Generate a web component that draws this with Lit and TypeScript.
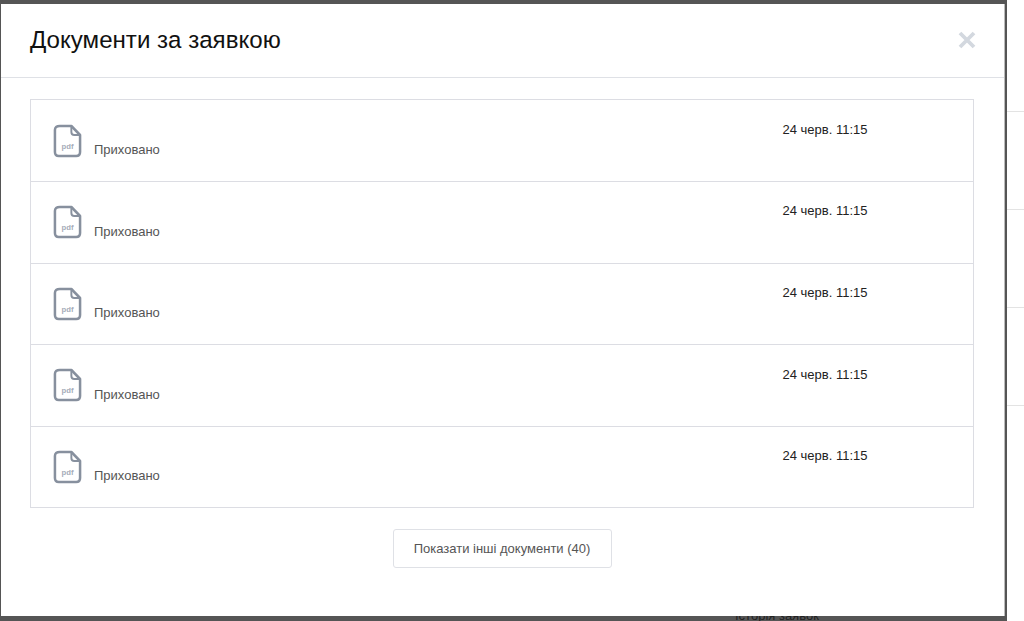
import { html, LitElement, css } from 'lit';
import { customElement } from 'lit/decorators.js';

const pdfIcon = html`<svg class="file-icon" width="29" height="34" viewBox="0 0 30 34" preserveAspectRatio="none" fill="none">
  <path d="M7 2 H19 L28 11 V28 Q28 32 24 32 H6 Q2 32 2 28 V6 Q2 2 7 2 Z" stroke="#87909e" stroke-width="2.6" stroke-linejoin="round"/>
  <path d="M19 2 V8 Q19 11 22 11 H28" stroke="#87909e" stroke-width="2" stroke-linejoin="round"/>
  <text x="15" y="25" text-anchor="middle" class="pdf-label">pdf</text>
</svg>`;

@customElement('app-root')
export class AppRoot extends LitElement {
  static styles = css`
    :host {
      display: flex;
      width: 1024px;
      height: 621px;
      overflow: hidden;
      background: #fff;
      font-family: 'Liberation Sans', Arial, sans-serif;
    }
    .backdrop {
      position: relative;
      box-sizing: border-box;
      width: 1007px;
      height: 621px;
      padding: 4px 2px 5px 1px;
      background: #555;
    }
    .peek {
      position: absolute;
      left: 735px;
      top: 608px;
      font-size: 13px;
      line-height: 16px;
      color: #222;
    }
    .modal {
      position: relative;
      z-index: 1;
      box-sizing: border-box;
      height: 612px;
      background: #fff;
      border-right: 1px solid #bbb;
    }
    .modal-head {
      display: flex;
      align-items: center;
      justify-content: space-between;
      box-sizing: border-box;
      height: 74px;
      padding: 0 29px 2px;
      border-bottom: 1px solid #dfe1e6;
    }
    h2 {
      margin: 0;
      font-size: 24.1px;
      font-weight: 400;
      color: #111;
    }
    .close {
      display: block;
      margin-right: -1px;
    }
    .modal-body {
      padding: 21px 30px 0 29px;
    }
    .list {
      border: 1px solid #dcdde3;
      border-bottom: 0;
      padding-top: 0.5px;
    }
    .row {
      display: flex;
      box-sizing: border-box;
      height: 81.6px;
      border-bottom: 1px solid #dcdde3;
    }
    .file {
      display: flex;
      flex: 1;
      padding: 23px 0 0 22px;
    }
    .file-icon {
      flex: none;
    }
    .pdf-label {
      font-family: 'Liberation Sans', Arial, sans-serif;
      font-size: 8px;
      font-weight: 700;
      fill: #a5acb9;
    }
    .name {
      margin: 18.5px 0 0 12px;
      font-size: 13px;
      line-height: 16px;
      color: #555;
    }
    .date {
      width: 190.5px;
      padding-top: 21.3px;
      font-size: 13px;
      line-height: 16px;
      color: #222;
    }
    .more {
      display: flex;
      justify-content: center;
      padding-top: 21px;
    }
    button {
      box-sizing: border-box;
      width: 219px;
      height: 39px;
      padding: 0;
      font: 13px 'Liberation Sans', Arial, sans-serif;
      color: #555;
      background: #fff;
      border: 1px solid #dfe1e6;
      border-radius: 3px;
    }
    .page {
      flex: 1;
      padding-top: 111px;
    }
    .page-row {
      box-sizing: border-box;
      height: 98px;
      border-top: 1px solid #e3e3e3;
    }
  `;

  render() {
    const rows = [1, 2, 3, 4, 5];
    return html`
      <div class="backdrop">
        <div class="peek">Історія заявок</div>
        <div class="modal">
          <div class="modal-head">
            <h2>Документи за заявкою</h2>
            <svg class="close" width="18" height="18" viewBox="0 0 18 18">
              <path d="M2 2 L16 16 M16 2 L2 16" stroke="#d3d8df" stroke-width="3.8"/>
            </svg>
          </div>
          <div class="modal-body">
            <div class="list">
              ${rows.map(() => html`
                <div class="row">
                  <div class="file">
                    ${pdfIcon}
                    <div class="name">Приховано</div>
                  </div>
                  <div class="date">24 черв. 11:15</div>
                </div>
              `)}
            </div>
            <div class="more">
              <button>Показати інші документи (40)</button>
            </div>
          </div>
        </div>
      </div>
      <div class="page">
        ${[1, 2, 3, 4].map(() => html`<div class="page-row"></div>`)}
      </div>
    `;
  }
}
